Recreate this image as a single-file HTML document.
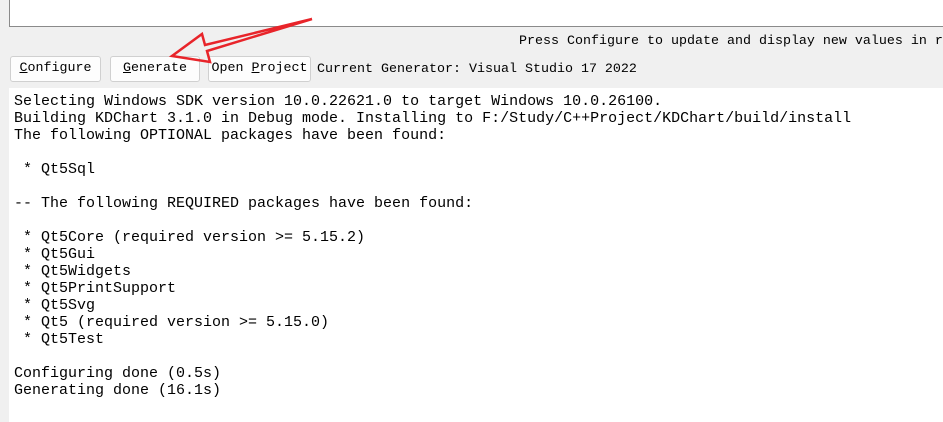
<!DOCTYPE html>
<html><head><style>
body{margin:0;width:943px;height:422px;background:#f0f0f0;position:relative;overflow:hidden;font-family:"Liberation Mono",monospace;font-size:15px;color:#000}
.top{position:absolute;left:9px;top:-2px;width:933px;height:27px;background:#fff;border:1px solid #8a8a8a;border-right:none}
.t{position:absolute;white-space:pre;line-height:17px}
.s{font-size:13.33px}
.btn{position:absolute;top:56px;height:24px;border:1px solid #d0d0d0;border-radius:3px;background:#fdfdfd;line-height:24px;text-align:center;white-space:pre;font-size:13.33px}
.out{position:absolute;left:9px;top:88px;width:934px;height:334px;background:#fff}
</style></head><body>
<div class="top"></div>
<div class="t s" style="left:519px;top:33px">Press Configure to update and display new values in r</div>
<div class="btn" style="left:10px;width:89px"><u>C</u>onfigure</div>
<div class="btn" style="left:110px;width:88px"><u>G</u>enerate</div>
<div class="btn" style="left:208px;width:101px">Open <u>P</u>roject</div>
<div class="t s" style="left:317px;top:61px">Current Generator: Visual Studio 17 2022</div>
<div class="out"></div>
<div class="t" style="left:14px;top:93px">Selecting Windows SDK version 10.0.22621.0 to target Windows 10.0.26100.
Building KDChart 3.1.0 in Debug mode. Installing to F:/Study/C++Project/KDChart/build/install
The following OPTIONAL packages have been found:

 * Qt5Sql

-- The following REQUIRED packages have been found:

 * Qt5Core (required version >= 5.15.2)
 * Qt5Gui
 * Qt5Widgets
 * Qt5PrintSupport
 * Qt5Svg
 * Qt5 (required version >= 5.15.0)
 * Qt5Test

Configuring done (0.5s)
Generating done (16.1s)</div>
<svg style="position:absolute;left:0;top:0" width="943" height="422">
<path d="M312 19 L205 45 L202 34 L172 56 L210 62 L207 51 Z" fill="none" stroke="#e8242a" stroke-width="2.5" stroke-linejoin="miter"/>
</svg>
</body></html>
